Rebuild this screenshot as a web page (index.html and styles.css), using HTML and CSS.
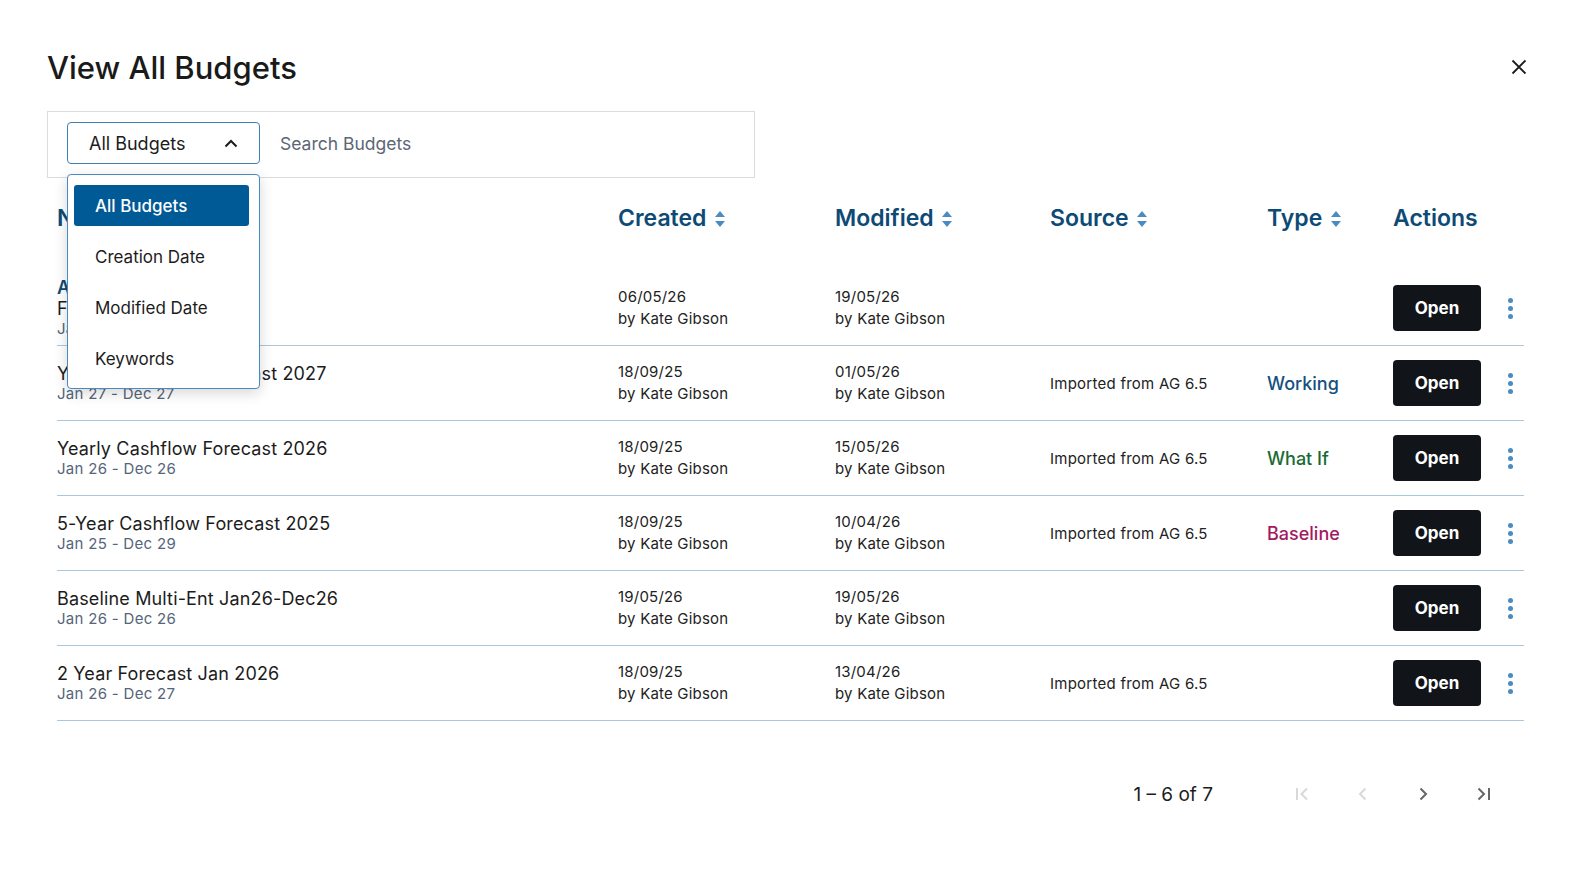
FILE: index.html
```html
<!DOCTYPE html>
<html lang="en">
<head>
    <meta charset="UTF-8">
    <meta name="viewport" content="width=device-width, initial-scale=1.0">
    <title>View All Budgets</title>
    <link rel="stylesheet" href="styles.css">
</head>
<body>
    <div class="dialog">
        <header class="dialog-head">
            <h1>View All Budgets</h1>
            <button class="close-btn" aria-label="Close">
                <svg width="16" height="16" viewBox="0 0 16 16"><path d="M1.5 1.5l13 13M14.5 1.5l-13 13" stroke="#1c1c1c" stroke-width="1.8" fill="none"/></svg>
            </button>
        </header>

        <div class="filter-bar">
            <div class="select">
                <div class="select-box">
                    <span>All Budgets</span>
                    <svg width="14" height="9" viewBox="0 0 14 9"><path d="M1.5 7.5l5.5-5.5 5.5 5.5" stroke="#1c1c1c" stroke-width="2" fill="none"/></svg>
                </div>
                <div class="select-menu">
                    <div class="select-item selected">All Budgets</div>
                    <div class="select-item">Creation Date</div>
                    <div class="select-item">Modified Date</div>
                    <div class="select-item">Keywords</div>
                </div>
            </div>
            <input class="search" type="text" placeholder="Search Budgets">
        </div>

        <div class="table">
            <div class="table-head">
                <div>Name <span class="sort"></span></div>
                <div>Created <span class="sort"></span></div>
                <div>Modified <span class="sort"></span></div>
                <div>Source <span class="sort"></span></div>
                <div>Type <span class="sort"></span></div>
                <div>Actions</div>
                <div></div>
            </div>

            <div class="row">
                <div class="name">
                    <div class="label">Active</div>
                    <div class="title">FY26 Forecast Budget</div>
                    <div class="range">Jan 26 - Dec 26</div>
                </div>
                <div class="meta">06/05/26<br>by Kate Gibson</div>
                <div class="meta">19/05/26<br>by Kate Gibson</div>
                <div class="source"></div>
                <div class="type"></div>
                <div><button class="open-btn">Open</button></div>
                <div class="kebab"><i></i><i></i><i></i></div>
            </div>

            <div class="row">
                <div class="name">
                    <div class="title">Yearly Cashflow Forecast 2027</div>
                    <div class="range">Jan 27 - Dec 27</div>
                </div>
                <div class="meta">18/09/25<br>by Kate Gibson</div>
                <div class="meta">01/05/26<br>by Kate Gibson</div>
                <div class="source">Imported from AG 6.5</div>
                <div class="type working">Working</div>
                <div><button class="open-btn">Open</button></div>
                <div class="kebab"><i></i><i></i><i></i></div>
            </div>

            <div class="row">
                <div class="name">
                    <div class="title">Yearly Cashflow Forecast 2026</div>
                    <div class="range">Jan 26 - Dec 26</div>
                </div>
                <div class="meta">18/09/25<br>by Kate Gibson</div>
                <div class="meta">15/05/26<br>by Kate Gibson</div>
                <div class="source">Imported from AG 6.5</div>
                <div class="type whatif">What If</div>
                <div><button class="open-btn">Open</button></div>
                <div class="kebab"><i></i><i></i><i></i></div>
            </div>

            <div class="row">
                <div class="name">
                    <div class="title">5-Year Cashflow Forecast 2025</div>
                    <div class="range">Jan 25 - Dec 29</div>
                </div>
                <div class="meta">18/09/25<br>by Kate Gibson</div>
                <div class="meta">10/04/26<br>by Kate Gibson</div>
                <div class="source">Imported from AG 6.5</div>
                <div class="type baseline">Baseline</div>
                <div><button class="open-btn">Open</button></div>
                <div class="kebab"><i></i><i></i><i></i></div>
            </div>

            <div class="row">
                <div class="name">
                    <div class="title">Baseline Multi-Ent Jan26-Dec26</div>
                    <div class="range">Jan 26 - Dec 26</div>
                </div>
                <div class="meta">19/05/26<br>by Kate Gibson</div>
                <div class="meta">19/05/26<br>by Kate Gibson</div>
                <div class="source"></div>
                <div class="type"></div>
                <div><button class="open-btn">Open</button></div>
                <div class="kebab"><i></i><i></i><i></i></div>
            </div>

            <div class="row">
                <div class="name">
                    <div class="title">2 Year Forecast Jan 2026</div>
                    <div class="range">Jan 26 - Dec 27</div>
                </div>
                <div class="meta">18/09/25<br>by Kate Gibson</div>
                <div class="meta">13/04/26<br>by Kate Gibson</div>
                <div class="source">Imported from AG 6.5</div>
                <div class="type"></div>
                <div><button class="open-btn">Open</button></div>
                <div class="kebab"><i></i><i></i><i></i></div>
            </div>
        </div>

        <div class="pager">
            <span class="pager-range">1 – 6 of 7</span>
            <button class="pager-btn" disabled>
                <svg width="18" height="18" viewBox="0 0 18 18"><path d="M3 3v12M13 3.5L7.5 9l5.5 5.5" stroke="currentColor" stroke-width="2" fill="none"/></svg>
            </button>
            <button class="pager-btn" disabled>
                <svg width="18" height="18" viewBox="0 0 18 18"><path d="M11.5 3.5L6 9l5.5 5.5" stroke="currentColor" stroke-width="2" fill="none"/></svg>
            </button>
            <button class="pager-btn">
                <svg width="18" height="18" viewBox="0 0 18 18"><path d="M6.5 3.5L12 9l-5.5 5.5" stroke="currentColor" stroke-width="2" fill="none"/></svg>
            </button>
            <button class="pager-btn">
                <svg width="18" height="18" viewBox="0 0 18 18"><path d="M4.5 3.5L10 9l-5.5 5.5M15 3v12" stroke="currentColor" stroke-width="2" fill="none"/></svg>
            </button>
        </div>
    </div>
</body>
</html>
```

FILE: styles.css
```css
body {
    margin: 0;
    font-family: Inter, "Noto Sans", Arial, sans-serif;
    background-color: #fff;
    color: #1c1c1c;
}
.dialog {
    padding: 48px 52px 0 47px;
}
.dialog-head {
    display: flex;
    justify-content: space-between;
    align-items: center;
    height: 39px;
}
.dialog-head h1 {
    margin: 0;
    font-size: 31px;
    font-weight: 500;
    color: #1a1a1a;
}
.close-btn {
    border: none;
    background: none;
    padding: 0;
    width: 16px;
    height: 16px;
    margin-top: -2px;
    cursor: pointer;
}

/* filter bar with select + search */
.filter-bar {
    margin-top: 24px;
    width: 708px;
    height: 67px;
    box-sizing: border-box;
    border: 1px solid #dcdcdc;
    display: flex;
    align-items: flex-start;
    padding: 10px 0 0 19px;
    gap: 20px;
}
.select {
    position: relative;
}
.select-box {
    width: 193px;
    height: 42px;
    box-sizing: border-box;
    border: 1px solid #3f7fb3;
    border-radius: 4px;
    display: flex;
    align-items: center;
    justify-content: space-between;
    padding: 0 21px 0 21px;
    font-size: 18px;
}
.select-menu {
    position: absolute;
    top: 52px;
    left: 0;
    width: 193px;
    box-sizing: border-box;
    padding: 10px 10px 9px 6px;
    background-color: #fff;
    border: 1px solid #4a8abf;
    border-radius: 4px;
    box-shadow: 0 4px 14px rgba(0, 0, 0, 0.16);
    display: flex;
    flex-direction: column;
    gap: 10px;
    z-index: 10;
}
.select-item {
    height: 41px;
    display: flex;
    align-items: center;
    padding-left: 21px;
    font-size: 17px;
    border-radius: 3px;
}
.select-item.selected {
    background-color: #005a96;
    color: #fff;
    font-weight: 500;
}
.search {
    border: none;
    outline: none;
    font-family: inherit;
    font-size: 17.5px;
    width: 400px;
    height: 42px;
    padding: 0;
    color: #1c1c1c;
}
.search::placeholder {
    color: #5c6675;
}

/* table */
.table {
    margin: 10px 3px 0 10px;
}
.table-head,
.row {
    display: grid;
    grid-template-columns: 561px 217px 215px 217px 126px 88px 1fr;
}
.table-head {
    height: 60px;
    align-items: center;
    margin-bottom: 23px;
    font-size: 23px;
    font-weight: 600;
    color: #0e4a76;
}
.sort {
    display: inline-block;
    position: relative;
    width: 11px;
    height: 16px;
    margin-left: 3px;
    vertical-align: -1px;
}
.sort::before,
.sort::after {
    content: "";
    position: absolute;
    left: 0;
    border-left: 5.5px solid transparent;
    border-right: 5.5px solid transparent;
}
.sort::before {
    top: 0;
    border-bottom: 6px solid #4b8bc0;
}
.sort::after {
    bottom: 0;
    border-top: 6px solid #4b8bc0;
}
.row {
    height: 74px;
    align-items: center;
    border-bottom: 1px solid #a9c8de;
}
.name .label {
    font-size: 18px;
    font-weight: 600;
    color: #0e4a76;
    line-height: 20px;
}
.name .title {
    font-size: 18px;
    line-height: 21px;
    color: #1c1c1c;
    letter-spacing: 0.15px;
}
.name .range {
    font-size: 15px;
    line-height: 20px;
    color: #56657a;
    letter-spacing: 0.3px;
}
.meta {
    font-size: 15px;
    line-height: 22px;
    color: #222;
    letter-spacing: 0.2px;
}
.source {
    font-size: 15px;
    color: #222;
    letter-spacing: 0.25px;
}
.type {
    font-size: 18px;
    font-weight: 500;
}
.type.working {
    color: #15507e;
}
.type.whatif {
    color: #1b6a33;
}
.type.baseline {
    color: #a3195f;
}
.open-btn {
    width: 88px;
    height: 46px;
    border: none;
    border-radius: 4px;
    background-color: #111418;
    color: #fff;
    font-family: inherit;
    font-size: 17px;
    font-weight: 700;
    cursor: pointer;
}
.kebab {
    display: flex;
    flex-direction: column;
    gap: 3px;
    padding-left: 27px;
}
.kebab i {
    width: 5px;
    height: 5px;
    border-radius: 50%;
    background-color: #4b8bc0;
}

/* pagination */
.pager {
    display: flex;
    justify-content: flex-end;
    align-items: center;
    height: 48px;
    margin-top: 49px;
    padding-right: 14px;
}
.pager-range {
    font-size: 19px;
    color: #1c1c1c;
    margin-right: 60px;
}
.pager-btn {
    width: 60px;
    height: 40px;
    border: none;
    background: none;
    color: #666;
    display: flex;
    align-items: center;
    justify-content: center;
    cursor: pointer;
}
.pager-btn:disabled {
    color: #d9d9d9;
    cursor: default;
}
```
